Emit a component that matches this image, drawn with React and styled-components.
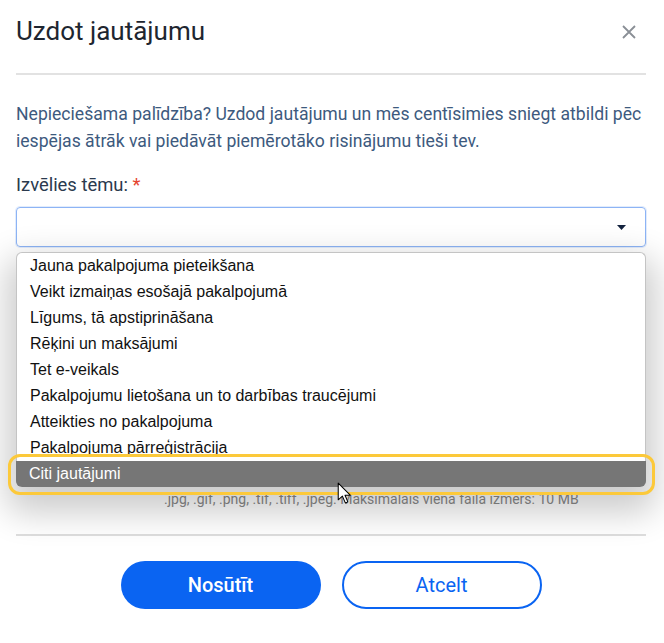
import React from "react";
import styled, { createGlobalStyle } from "styled-components";

const GlobalStyle = createGlobalStyle`
  html, body {
    margin: 0;
    padding: 0;
    background: #fff;
  }
  body {
    font-family: Roboto, "Noto Sans", Arial, sans-serif;
  }
`;

const topics = [
  "Jauna pakalpojuma pieteikšana",
  "Veikt izmaiņas esošajā pakalpojumā",
  "Līgums, tā apstiprināšana",
  "Rēķini un maksājumi",
  "Tet e-veikals",
  "Pakalpojumu lietošana un to darbības traucējumi",
  "Atteikties no pakalpojuma",
  "Pakalpojuma pārreģistrācija",
  "Citi jautājumi",
];

function Modal() {
  return (
    <Dialog>
      <Header>
        <Title>Uzdot jautājumu</Title>
        <CloseButton aria-label="Aizvērt">
          <svg width="16" height="16" viewBox="0 0 16 16">
            <path d="M2 2 L14 14 M14 2 L2 14" stroke="#8a8f96" strokeWidth="1.8" fill="none" />
          </svg>
        </CloseButton>
      </Header>

      <Intro>
        Nepieciešama palīdzība? Uzdod jautājumu un mēs centīsimies sniegt atbildi pēc
        iespējas ātrāk vai piedāvāt piemērotāko risinājumu tieši tev.
      </Intro>

      <Label>
        Izvēlies tēmu: <Required>*</Required>
      </Label>

      <Field>
        <SelectBox>
          <svg width="9" height="5" viewBox="0 0 9 5">
            <path d="M0 0 H9 L4.5 5 Z" fill="#14233f" />
          </svg>
        </SelectBox>

        <Menu>
          {topics.map((t, i) => (
            <Option key={t} active={i === topics.length - 1}>
              {t}
            </Option>
          ))}
        </Menu>

        {/* form parts hidden behind the open list */}
        <TextArea />
        <AttachLink aria-label="Pievienot failus" />
        <FileInfo>.jpg, .gif, .png, .tif, .tiff, .jpeg. Maksimālais viena faila izmērs: 10 MB</FileInfo>

        <Cursor width="15" height="23" viewBox="0 0 14 22">
          <path
            d="M1 1 L1 17 L5 13.5 L7.8 20 L10.2 19 L7.5 12.6 L12.5 12.6 Z"
            fill="#fff"
            stroke="#000"
            strokeWidth="1"
            strokeLinejoin="round"
          />
        </Cursor>
      </Field>

      <Footer>
        <PrimaryButton>Nosūtīt</PrimaryButton>
        <OutlineButton>Atcelt</OutlineButton>
      </Footer>
    </Dialog>
  );
}

export default function App() {
  return (
    <>
      <GlobalStyle />
      <Modal />
    </>
  );
}

const Dialog = styled.div`
  width: 664px;
  height: 643px;
  box-sizing: border-box;
  padding: 0 18px 0 16px;
  background: #fff;
  overflow: hidden;
`;

const Header = styled.div`
  display: flex;
  align-items: flex-start;
  justify-content: space-between;
  height: 57px;
  padding-top: 16px;
  box-sizing: content-box;
  border-bottom: 2px solid #e2e2e2;
`;

const Title = styled.h2`
  margin: 0;
  font-size: 26px;
  line-height: 30px;
  font-weight: 400;
  color: #1e2630;
`;

const CloseButton = styled.button`
  border: 0;
  background: none;
  padding: 0;
  margin: 8px 9px 0 0;
  display: flex;
  cursor: pointer;
`;

const Intro = styled.p`
  margin: 26px 0 0;
  font-size: 17.6px;
  line-height: 27px;
  color: #3d5a7e;
`;

const Label = styled.div`
  margin-top: 19px;
  font-size: 18.4px;
  line-height: 22px;
  color: #2b3a4e;
`;

const Required = styled.span`
  color: #e5432f;
`;

const Field = styled.div`
  position: relative;
  margin-top: 11px;
`;

const SelectBox = styled.div`
  height: 40px;
  box-sizing: border-box;
  border: 1.5px solid #8db4f5;
  border-radius: 4px;
  box-shadow: 0 0 0 1px rgba(141, 180, 245, 0.25);
  display: flex;
  align-items: center;
  justify-content: flex-end;
  padding-right: 19px;
`;

const Menu = styled.ul`
  position: absolute;
  top: 45px;
  left: 0;
  width: 630px;
  box-sizing: border-box;
  margin: 0;
  padding: 0;
  list-style: none;
  background: #fff;
  border: 1px solid #c4c4c4;
  border-bottom: 0;
  border-radius: 6px;
  box-shadow: 0 16px 34px 10px rgba(0, 0, 0, 0.2);
  z-index: 2;
`;

const Option = styled.li`
  position: relative;
  height: 26px;
  line-height: 26px;
  padding-left: 13px;
  font-family: "Liberation Sans", Arial, sans-serif;
  font-size: 16px;
  color: ${(p) => (p.active ? "#fff" : "#111")};
  background: ${(p) => (p.active ? "#767676" : "transparent")};
  border-radius: ${(p) => (p.active ? "0 0 6px 6px" : "0")};
  margin: ${(p) => (p.active ? "0 -1px" : "0")};

  ${(p) =>
    p.active &&
    `
    &::after {
      content: "";
      position: absolute;
      left: -8px;
      right: -9px;
      top: -7px;
      bottom: -8px;
      border: 3px solid #fcc93a;
      border-radius: 12px;
      pointer-events: none;
    }
  `}
`;

const TextArea = styled.div`
  margin-top: 20px;
  height: 177px;
  border: 1px solid #c9ced6;
  border-radius: 4px;
`;

const AttachLink = styled.a`
  display: block;
  margin: 20px 0 0 1px;
  width: 108px;
  height: 18px;
  border-bottom: 1px solid #1b2d55;
`;

const FileInfo = styled.div`
  margin-top: 6px;
  padding-left: 148px;
  font-size: 14px;
  line-height: 16px;
  color: #8a8a8a;
`;

const Cursor = styled.svg`
  position: absolute;
  left: 321px;
  top: 275px;
  z-index: 3;
`;

const Footer = styled.div`
  margin-top: 27px;
  border-top: 2px solid #dedede;
  padding-top: 25px;
  display: flex;
  justify-content: center;
  gap: 21px;
`;

const BaseButton = styled.button`
  width: 200px;
  height: 48px;
  border-radius: 24px;
  font-family: Roboto, sans-serif;
  font-size: 20px;
  box-sizing: border-box;
  cursor: pointer;
`;

const PrimaryButton = styled(BaseButton)`
  background: #0a64f2;
  border: 0;
  color: #fff;
  font-weight: 500;
`;

const OutlineButton = styled(BaseButton)`
  background: #fff;
  border: 2px solid #0a64f2;
  color: #0a64f2;
  font-weight: 400;
`;
